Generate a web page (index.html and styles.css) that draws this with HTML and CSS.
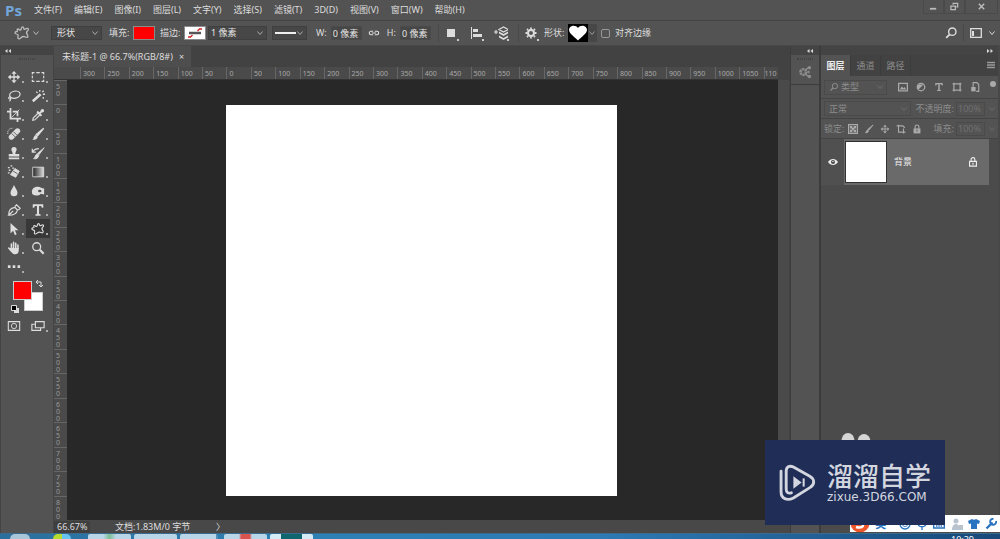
FILE: index.html
```html
<!DOCTYPE html>
<html lang="zh-CN">
<head>
<meta charset="utf-8">
<title>未标题-1 @ 66.7%(RGB/8#)</title>
<link rel="stylesheet" href="styles.css">
</head>
<body>
<svg class="defs" aria-hidden="true">
  <symbol id="chev" viewBox="0 0 8 8"><path d="M1.500 2.500 4 5.500 6.500 2.500" fill="none" stroke="currentColor"/></symbol>
  <symbol id="blob" viewBox="0 0 16 16"><path d="M5.500 5C6.500 5.500 7 5 7.300 3.500 7.800 1.300 9.500 1.500 9.700 3.200 9.800 4.500 10.500 4.500 12 3.700 14.300 2.600 15.300 4.300 13.500 5.800 12 7 12.200 8 13.300 9.500 14.800 11.800 13.500 13 11.500 12 9.500 11 8.500 11.300 7 12.700 5 14.500 3.300 13.800 4 11.500 4.500 10 4 9.500 2.300 9 .3 8.300.8 6.500 2.500 6.600 3.500 6.700 3.500 6 3.200 5 3 3.500 4.500 3.800 5.500 5Z" fill="none" stroke="currentColor" stroke-width="1.300" stroke-linejoin="round"/></symbol>
  <symbol id="search" viewBox="0 0 16 16"><circle cx="9.500" cy="6.500" r="4.200" fill="none" stroke="currentColor" stroke-width="1.600"/><path d="M6.500 9.500 2.500 13.500" stroke="currentColor" stroke-width="2"/></symbol>
  <symbol id="move" viewBox="0 0 16 16"><path d="M8 3v10M3 8h10" stroke="currentColor" stroke-width="1.500"/><path d="M8 1 5 4.300h6ZM8 15l-3-3.300h6ZM1 8l3.300-3v6ZM15 8l-3.300-3v6Z" fill="currentColor"/></symbol>
  <symbol id="brush" viewBox="0 0 16 16"><path d="M14.500 1.500 7.500 10 6 8.700Z" fill="currentColor" stroke="currentColor" stroke-width="1.500"/><path d="M5.300 9 7.800 11.300C6.500 14.500 4 15 1.500 14.500 3.500 13 2.800 10 5.300 9Z" fill="currentColor"/></symbol>
  <symbol id="type" viewBox="0 0 16 16"><path d="M2 1.500h12v4h-1.500L11.500 3.500H9.200v9l1.800.5v1.500H5V13l1.800-.5v-9H4.500l-1 2H2Z" fill="currentColor"/></symbol>
  <symbol id="padlock" viewBox="0 0 16 16"><path d="M2.500 7h11v8h-11Z" fill="currentColor"/><path d="M5 7V4.500a3 3 0 0 1 6 0V7" fill="none" stroke="currentColor" stroke-width="1.800"/><path d="M8 9v3" stroke="#535353" stroke-width="1.500"/></symbol>
</svg>
<div class="app">
  <header class="menubar">
    <span class="brand">Ps</span>
    <nav class="menus">
      <button>文件(F)</button><button>编辑(E)</button><button>图像(I)</button><button>图层(L)</button><button>文字(Y)</button><button>选择(S)</button><button>滤镜(T)</button><button>3D(D)</button><button>视图(V)</button><button>窗口(W)</button><button>帮助(H)</button>
    </nav>
    <div class="winbtns">
      <button aria-label="最小化"><svg viewBox="0 0 10 10"><path d="M1 7.500h7" stroke="currentColor" stroke-width="2"/></svg></button>
      <button aria-label="还原"><svg viewBox="0 0 10 10"><path d="M3.500 3V1.500h5v4H7M1 4.500h5v4H1Z" fill="none" stroke="currentColor" stroke-width="1.400"/></svg></button>
      <button class="close" aria-label="关闭"><svg viewBox="0 0 10 10"><path d="M2 2l6 6M8 2 2 8" stroke="currentColor" stroke-width="1.600"/></svg></button>
    </div>
  </header>

  <section class="options">
    <button class="preset" aria-label="自定形状工具"><svg class="i16"><use href="#blob"/></svg><svg class="i8"><use href="#chev"/></svg></button>
    <div class="pick mode"><select aria-label="模式"><option>形状</option></select><svg class="i8"><use href="#chev"/></svg></div>
    <div class="field"><span>填充:</span><button class="swatch red" aria-label="填充"></button></div>
    <div class="field"><span>描边:</span><button class="swatch none" aria-label="描边"><svg viewBox="0 0 20 12"><path d="M4 6h12" stroke="#555" stroke-width="2.500"/><path d="M3 10h2.500l2-2M12.500 4l2-2H17" fill="none" stroke="#d02020" stroke-width="1.300"/></svg></button></div>
    <div class="pick width"><input aria-label="描边宽度" value="1 像素"><svg class="i8"><use href="#chev"/></svg></div>
    <button class="pick line" aria-label="描边类型"><i></i><svg class="i8"><use href="#chev"/></svg></button>
    <label class="size">W:<input value="0 像素"></label>
    <button class="ib" aria-label="链接"><svg class="i12" viewBox="0 0 14 8"><path d="M6 2H3.500a2 2 0 0 0 0 4H6M8 2h2.500a2 2 0 0 1 0 4H8M4.500 4h5" fill="none" stroke="currentColor" stroke-width="1.300"/></svg></button>
    <label class="size">H:<input value="0 像素"></label>
    <div class="group">
      <button class="ib drop" aria-label="路径操作"><svg class="i12" viewBox="0 0 12 12"><path d="M2 2h8v8H2Z" fill="currentColor"/></svg></button>
      <button class="ib drop" aria-label="对齐"><svg class="i12" viewBox="0 0 12 12"><path d="M1.500 0v12" stroke="currentColor"/><path d="M3 2h5v3H3ZM3 7h9v3H3Z" fill="currentColor"/></svg></button>
      <button class="ib drop" aria-label="排列"><svg class="i14" viewBox="0 0 14 14"><path d="M0 6h4M2 4v4" stroke="currentColor" stroke-width="1.200"/><path d="M5 3.500 9.500 1 14 3.500 9.500 6Z" fill="none" stroke="currentColor" stroke-width="1.300"/><path d="M5 5.500 9.500 8 14 5.500v2L9.500 10 5 7.500ZM5 9.500 9.500 12 14 9.500v2L9.500 14 5 11.500Z" fill="currentColor"/></svg></button>
    </div>
    <div class="group last">
      <button class="ib drop" aria-label="设置"><svg class="i12" viewBox="0 0 12 12"><circle cx="6" cy="6" r="3" fill="none" stroke="currentColor" stroke-width="2"/><path d="M6 .5V2M6 10v1.500M.5 6H2M10 6h1.500M2 2l1 1M9 9l1 1M10 2 9 3M3 9l-1 1" stroke="currentColor" stroke-width="1.800"/></svg></button>
      <div class="field"><span>形状:</span><button class="heart" aria-label="形状"><svg viewBox="0 0 20 18"><path d="M10 16.500C7 13 1 10 1 5.800 1 1.500 7.500 0 10 4c2.500-4 9-2.500 9 1.800 0 4.200-6 7.200-9 10.700Z" fill="#fff"/></svg></button><button class="dd" aria-label="选择形状"><svg class="i8"><use href="#chev"/></svg></button></div>
    </div>
    <label class="check"><input type="checkbox">对齐边缘</label>
    <div class="right">
      <button class="ib" aria-label="搜索"><svg class="i14"><use href="#search"/></svg></button>
      <button class="ws" aria-label="工作区"><svg class="i12" viewBox="0 0 12 12"><path d="M.7 1.700h10.600v8.600H.7Z" fill="none" stroke="currentColor" stroke-width="1.300"/><path d="M2 4h2v5H2Z" fill="currentColor"/></svg><svg class="i8"><use href="#chev"/></svg></button>
    </div>
  </section>

  <main class="main">
    <aside class="toolbox">
      <div class="strip"><svg class="i8" viewBox="0 0 8 8"><path d="M3.500 2v4L1 4ZM7 2v4L4.500 4Z" fill="currentColor"/></svg></div>
      <div class="grip"></div>
      <div class="tools">
        <button aria-label="移动"><svg><use href="#move"/></svg></button>
        <button aria-label="选框"><svg viewBox="0 0 16 16"><path d="M1.500 5V3H4M6 3h4M12 3h2.500v2M14.500 6.500v3M14.500 11v2H12M10 13H6M4 13H1.500v-2M1.500 9.500v-3" fill="none" stroke="currentColor" stroke-width="1.300"/></svg></button>
        <button aria-label="套索"><svg viewBox="0 0 16 16"><ellipse cx="9" cy="6.500" rx="6" ry="4" transform="rotate(-12 9 6.500)" fill="none" stroke="currentColor" stroke-width="1.400"/><path d="M4 9c-3 0-2.500 3 0 2.500M4 10c.5 2 0 3.500-1.500 4" fill="none" stroke="currentColor" stroke-width="1.200"/></svg></button>
        <button aria-label="魔棒"><svg viewBox="0 0 16 16"><path d="M2 14 11 6" stroke="currentColor" stroke-width="2.800"/><path d="M10 1v2M14 9v2M14.500 2 13 3.500M6 3l1.500 1.500M13.500 6H16" stroke="currentColor" stroke-width="1.500"/></svg></button>
        <button aria-label="裁剪"><svg viewBox="0 0 16 16"><path d="M4 0v12h8M0 4h4M6.500 4H12v5.500M12 12v4M12 12h4" fill="none" stroke="currentColor" stroke-width="2"/><path d="m5 11 9-9" stroke="currentColor"/></svg></button>
        <button aria-label="吸管"><svg viewBox="0 0 16 16"><path d="M8 6 2.500 11.500 2 14l2.500-.5L10 8" fill="none" stroke="currentColor" stroke-width="1.300"/><path d="m7 4 5 5M9 7l4-4" stroke="currentColor" stroke-width="2.200"/><circle cx="13" cy="3" r="2" fill="currentColor"/></svg></button>
        <button aria-label="修复画笔"><svg viewBox="0 0 16 16"><path d="m5 11.500 7-7" stroke="currentColor" stroke-width="6" stroke-linecap="round"/><path d="m5.500 7.500 4 4M7.500 5.500l4 4" stroke="#535353"/><path d="M1 8C0 4 3 1 7 1.500" fill="none" stroke="currentColor" stroke-dasharray="1.500 1"/></svg></button>
        <button aria-label="画笔"><svg><use href="#brush"/></svg></button>
        <button aria-label="图章"><svg viewBox="0 0 16 16"><path d="M8 1a3 3 0 0 1 3 3c0 2-1.500 2.500-1.500 5H14v3H2V9h4.500C6.500 6.500 5 6 5 4a3 3 0 0 1 3-3ZM2 13h12v2H2Z" fill="currentColor"/></svg></button>
        <button aria-label="历史画笔"><svg viewBox="0 0 16 16"><path d="m15 2-6 8-1.500-1.500ZM7 9l2 2c-1 3-3 4-6 3.500C5 13 4.500 10.500 7 9Z" fill="currentColor" stroke="currentColor"/><path d="M1.500 3v4h4M2 6.500C4 3.500 6 3 9 3" fill="none" stroke="currentColor" stroke-width="1.400"/></svg></button>
        <button aria-label="橡皮擦"><svg viewBox="0 0 16 16"><path d="m9 4 5 3-4 7-6-3Z" fill="currentColor" stroke="currentColor" stroke-linejoin="round"/><path d="m7 7 5 3" stroke="#535353"/><path d="M1 3h2M4 1h2M2 6h2M1 9h2M6 3.500h2" stroke="currentColor" stroke-width="1.500"/></svg></button>
        <button aria-label="渐变"><svg viewBox="0 0 16 16"><linearGradient id="grad"><stop stop-color="#222"/><stop offset="1" stop-color="#ddd"/></linearGradient><path d="M2 2.500h12.500v11H2Z" fill="url(#grad)" stroke="currentColor"/></svg></button>
        <button aria-label="模糊"><svg viewBox="0 0 16 16"><path d="M8 1c1.500 4 4 6 4 9a4 4 0 0 1-8 0c0-3 2.500-5 4-9Z" fill="currentColor"/></svg></button>
        <button aria-label="减淡"><svg viewBox="0 0 16 16"><path d="M1 9c0-4 3-6 7-6 3 0 4 2 7 2v7l-4-1c-1 2-3 2-5 2-3 0-5-1-5-4Z" fill="currentColor"/><ellipse cx="10" cy="8" rx="2" ry="1.500" fill="#535353"/></svg></button>
        <button aria-label="钢笔"><svg viewBox="0 0 16 16"><path d="M2 14c0-5 1-8 7-9l3 3c-1 5-5 6-10 6l5-5M9 4l2-2 4 4-2 2" fill="none" stroke="currentColor" stroke-width="1.400"/></svg></button>
        <button aria-label="文字"><svg><use href="#type"/></svg></button>
        <button aria-label="路径选择"><svg viewBox="0 0 16 16"><path d="M4 1v12l3-3 2 5 2-1-2-4.500h4Z" fill="currentColor"/></svg></button>
        <button class="on" aria-label="自定形状"><svg><use href="#blob"/></svg></button>
        <button aria-label="抓手"><svg viewBox="0 0 16 16"><path d="M5 9V3.500M7.500 8V1.500M10 8V2.500M12.500 9V4.500M2 8l3 3.500" stroke="currentColor" stroke-width="1.800" stroke-linecap="round"/><path d="M4 8h9.400v3c0 5-6.400 5-8 2L2.500 9Z" fill="currentColor"/></svg></button>
        <button class="flat" aria-label="缩放"><svg viewBox="0 0 16 16"><circle cx="6.500" cy="6.500" r="4.500" fill="none" stroke="currentColor" stroke-width="1.500"/><path d="m10 10 4.500 4.500" stroke="currentColor" stroke-width="2.400"/></svg></button>
        <button aria-label="编辑工具栏"><svg viewBox="0 0 16 16"><path d="M1 6h3v3H1ZM6.500 6h3v3h-3ZM12 6h3v3h-3Z" fill="currentColor"/></svg></button>
      </div>
      <div class="colors">
        <button class="bg" aria-label="背景色"></button>
        <button class="fg" aria-label="前景色"></button>
        <svg class="swap" viewBox="0 0 8 8"><path d="M1.500 2H6v4.500M3 0 1 2l2 2M4 5l2 2 2-2" fill="none" stroke="currentColor"/></svg>
        <svg class="reset" viewBox="0 0 8 8"><path d="M3 3h5v5H3Z" fill="#ddd"/><path d="M.5.500h5v5h-5Z" fill="#000" stroke="#ddd"/></svg>
      </div>
      <div class="tools modes">
        <button class="flat" aria-label="快速蒙版"><svg viewBox="0 0 16 16"><path d="M1.500 3h13v10h-13Z" fill="none" stroke="currentColor" stroke-width="1.200"/><circle cx="8" cy="8" r="3" fill="none" stroke="currentColor"/></svg></button>
        <button aria-label="屏幕模式"><svg viewBox="0 0 16 16"><path d="M5 6H1v7h10v-3M5 3h10v7H5Z" fill="none" stroke="currentColor" stroke-width="1.300"/></svg></button>
      </div>
    </aside>

    <section class="document">
      <div class="tabs"><div class="tab"><span>未标题-1 @ 66.7%(RGB/8#)</span><button aria-label="关闭文档">×</button></div></div>
      <div class="hruler"><div class="scale">
        <span>300</span><span>250</span><span>200</span><span>150</span><span>100</span><span>50</span><span>0</span><span>50</span><span>100</span><span>150</span><span>200</span><span>250</span><span>300</span><span>350</span><span>400</span><span>450</span><span>500</span><span>550</span><span>600</span><span>650</span><span>700</span><span>750</span><span>800</span><span>850</span><span>900</span><span>950</span><span>1000</span><span>1050</span><span>110</span>
      </div></div>
      <div class="work">
        <div class="vruler"><span>50</span><span>0</span><span>50</span><span>100</span><span>150</span><span>200</span><span>250</span><span>300</span><span>350</span><span>400</span><span>450</span><span>500</span><span>550</span><span>600</span><span>650</span><span>700</span><span>750</span><span>800</span></div>
        <div class="stage"><div class="canvas"></div></div>
        <div class="scroll"></div>
      </div>
      <footer class="status"><span class="zoom">66.67%</span><span class="info">文档:1.83M/0 字节</span><span class="arrow">〉</span></footer>
    </section>

    <aside class="dock">
      <div class="strip"><svg class="i8" viewBox="0 0 8 8"><path d="M3.500 2v4L1 4ZM7 2v4L4.500 4Z" fill="currentColor"/></svg></div>
      <div class="dockbody"><div class="grip"></div><button aria-label="库"><svg viewBox="0 0 16 16"><circle cx="6" cy="8" r="3.200" fill="none" stroke="currentColor" stroke-width="3" stroke-dasharray="2.500 .8"/><path d="m8 6 4-3M8 10l4 3" stroke="currentColor" stroke-width="1.600"/><circle cx="13" cy="3" r="2" fill="currentColor"/><circle cx="13" cy="13" r="2" fill="currentColor"/><circle cx="12" cy="8" r="1.500" fill="currentColor"/></svg></button></div>
    </aside>

    <aside class="panel">
      <div class="strip end"><svg class="i8" viewBox="0 0 8 8"><path d="M1 2v4l2.500-2ZM4.500 2v4L7 4Z" fill="currentColor"/></svg></div>
      <div class="ptabs"><button class="active">图层</button><button>通道</button><button>路径</button><svg class="i10 burger" viewBox="0 0 10 10"><path d="M1 2.500h8M1 5h8M1 7.500h8" stroke="currentColor" stroke-width="1.400"/></svg></div>
      <div class="row filter">
        <div class="box kind"><svg class="i10"><use href="#search"/></svg><select aria-label="过滤类型"><option>类型</option></select><svg class="i8"><use href="#chev"/></svg></div>
        <div class="icons">
          <svg class="i10" viewBox="0 0 16 16"><path d="M1 2h14v12H1Z" fill="none" stroke="currentColor" stroke-width="2"/><path d="m3 12 3-5 3 3 2-2 2 4Z" fill="currentColor"/></svg>
          <svg class="i10" viewBox="0 0 16 16"><circle cx="8" cy="8" r="6" fill="none" stroke="currentColor" stroke-width="2"/><path d="M4 12a6 6 0 0 1 0-8l8 0Z" fill="currentColor"/></svg>
          <svg class="i10"><use href="#type"/></svg>
          <svg class="i10" viewBox="0 0 16 16"><path d="M3 3h10v10H3ZM1 3h2V1M13 1v2h2M1 13h2v2M13 15v-2h2" fill="none" stroke="currentColor" stroke-width="2"/></svg>
          <svg class="i10" viewBox="0 0 16 16"><path d="M5 8V1h6l3 3v11h-4" fill="none" stroke="currentColor" stroke-width="1.800"/><path d="M2 8h7v7H2Z" fill="currentColor"/></svg>
        </div>
        <i class="dot"></i>
      </div>
      <div class="row blend">
        <div class="box"><select aria-label="混合模式"><option>正常</option></select><svg class="i8"><use href="#chev"/></svg></div>
        <label>不透明度:<input value="100%"></label><svg class="i8 dim"><use href="#chev"/></svg>
      </div>
      <div class="row lock">
        <span>锁定:</span>
        <div class="icons">
          <svg class="i10" viewBox="0 0 16 16"><path d="M1 1h14v14H1Z" fill="none" stroke="currentColor" stroke-width="2"/><path d="M3 3h4v4H3ZM9 3h4v4H9ZM6 6h4v4H6ZM3 9h4v4H3ZM9 9h4v4H9Z" fill="currentColor"/></svg>
          <svg class="i10"><use href="#brush"/></svg>
          <svg class="i10"><use href="#move"/></svg>
          <svg class="i10" viewBox="0 0 16 16"><path d="M1 3h10l3 3M4 1v12h11M12 7v8" fill="none" stroke="currentColor" stroke-width="1.800"/></svg>
          <svg class="i10"><use href="#padlock"/></svg>
        </div>
        <label>填充:<input value="100%"></label><svg class="i8 dim"><use href="#chev"/></svg>
      </div>
      <div class="layers">
        <div class="layer">
          <button class="eye" aria-label="可见性"><svg class="i10" viewBox="0 0 16 12"><path d="M0 6c4-6.500 12-6.500 16 0-4 6.500-12 6.500-16 0Z" fill="currentColor"/><circle cx="8" cy="6" r="3.200" fill="#444"/><circle cx="8" cy="5" r="1.200" fill="#eee"/></svg></button>
          <div class="item"><i class="thumb"></i><span>背景</span><svg class="i10" viewBox="0 0 16 16"><path d="M2.500 7h11v7.500h-11ZM5 7V4a3 3 0 0 1 6 0v3M8 9v3.500" fill="none" stroke="currentColor" stroke-width="1.800"/></svg></div>
        </div>
      </div>
    </aside>
  </main>

  <footer class="taskbar"><i class="orb"></i><i class="spots"></i><i class="task"></i><i class="task"></i><i class="task stack"></i><i class="task hot"></i><i class="task ps"></i><time>10:39</time></footer>

  <div class="ime">
    <svg class="sogou" viewBox="0 0 20 18"><circle cx="10" cy="8" r="9.500" fill="#f0562b"/><path d="M14 4C8 2 5 7 10 8s4 6-4 4" fill="none" stroke="#fff" stroke-width="2.500"/></svg>
    <span>英</span><span>’</span>
    <svg class="i12" viewBox="0 0 12 12"><circle cx="6" cy="6" r="5" fill="none" stroke="currentColor" stroke-width="1.400"/><path d="M3.500 7c1 2 4 2 5 0M4 3.500V5M8 3.500V5" fill="none" stroke="currentColor"/></svg>
    <svg class="i12" viewBox="0 0 12 12"><rect x="4" y="0" width="4" height="7" rx="2" fill="currentColor"/><path d="M2 5c0 5 8 5 8 0M6 9v3" fill="none" stroke="currentColor" stroke-width="1.300"/></svg>
    <svg class="i12" viewBox="0 0 12 12"><path d="M.7 2h10.600v8H.7Z" fill="none" stroke="currentColor" stroke-width="1.400"/><path d="M2 4.500h8M3 8h6" stroke="currentColor" stroke-width="1.300" stroke-dasharray="1.500 .8"/></svg>
    <svg class="i12 pale" viewBox="0 0 12 12"><circle cx="5" cy="3" r="2.500" fill="currentColor"/><path d="M1 12c0-8 8-8 8 0ZM8 7h4v5H8Z" fill="currentColor"/></svg>
    <svg class="i12" viewBox="0 0 12 12"><path d="M4 1c1 1 3 1 4 0l4 2-1 3-2-.5V11H3V5.500L1 6 0 3Z" fill="currentColor"/></svg>
    <svg class="i12" viewBox="0 0 12 12"><path d="m1.500 10.500 6-6" stroke="currentColor" stroke-width="2.400"/><path d="M11 3a3 3 0 1 1-2.500-2.200" fill="none" stroke="currentColor" stroke-width="1.800"/></svg>
  </div>
  <div class="watermark">
    <svg class="ears" viewBox="0 0 30 14"><ellipse cx="7" cy="8" rx="6.500" ry="8" fill="#d5d5d5"/><ellipse cx="23" cy="9" rx="6.500" ry="8" fill="#d5d5d5"/></svg>
    <svg class="logo" viewBox="0 0 36 36"><path d="M12 28c-3 1-5 0-5-4V7c0-4 3-6 7-4l16 9c5 3 5 8 0 11L14 33c-6 3-12 1-12-6V7" fill="none" stroke="#d3d6df" stroke-width="2.800" stroke-linecap="round"/><path d="M14 12v12l8-6Z" fill="#d3d6df"/><path d="M24 14v8" stroke="#d3d6df" stroke-width="2"/></svg>
    <div class="words"><b>溜溜自学</b><span>zixue.3D66.COM</span></div>
  </div>
</div>
</body>
</html>
```
FILE: styles.css
```css
* { box-sizing: border-box; }
body { margin: 0; font: 9px/12px "Noto Sans", "Noto Sans CJK SC", sans-serif; color: #ddd; background: #424242; }
button, input, select { margin: 0; padding: 0; border: 0; border-radius: 0; background: none; font: inherit; color: inherit; appearance: none; outline: 0; }
button { display: flex; align-items: center; justify-content: center; }
svg { display: block; flex: none; }
i { display: block; }
.defs { display: none; }
.i8 { width: 8px; height: 8px; }
.i10 { width: 10px; height: 10px; }
.i12 { width: 12px; height: 12px; }
.i14 { width: 14px; height: 14px; }
.i16 { width: 16px; height: 16px; }

.app { position: relative; height: 100vh; display: flex; flex-direction: column; overflow: hidden; }

.menubar { display: flex; align-items: center; height: 21px; background: #535353; border-bottom: 1px solid #444; flex: none; }
.brand { width: 29px; padding-left: 5px; font: bold 15px/20px "Open Sans", sans-serif; color: #72a7dc; }
.menus { display: flex; gap: 12px; flex: 1; padding-left: 5px; }
.winbtns { display: flex; align-self: flex-start; padding-right: 2px; color: #bbb; }
.winbtns button { width: 21px; height: 14px; border: 1px solid #4a4a4a; border-top: 0; }
.winbtns .close { width: 33px; }
.winbtns svg { width: 9px; height: 9px; }

.options { display: flex; align-items: center; height: 25px; background: #535353; border-bottom: 1px solid #484848; flex: none; padding: 0 4px 0 14px; }
.preset { gap: 2px; width: 34px; margin-right: 3px; color: #bbb; justify-content: flex-start; }
.pick { display: flex; align-items: center; height: 14px; background: #474747; border: 1px solid #3f3f3f; padding: 0 2px 0 4px; color: #aaa; }
.pick select, .pick input { flex: 1; min-width: 0; width: 100%; color: #e4e4e4; }
.mode { width: 51px; margin-right: 7px; padding-left: 5px; }
.field { display: flex; align-items: center; }
.field span { width: 24px; white-space: nowrap; }
.swatch { width: 22px; height: 14px; border: 1px solid #8a8a8a; margin-right: 5px; }
.swatch.red { background: #f00; }
.swatch.none { background: #fff; margin-right: 2px; }
.swatch svg { width: 20px; height: 12px; }
.width { width: 59px; margin-right: 5px; padding-left: 2px; }
.line { width: 35px; margin-right: 9px; padding: 0 2px; }
.line i { flex: 1; height: 2px; background: #eee; }
.size { display: flex; align-items: center; gap: 4px; }
.size input { width: 31px; height: 14px; background: #474747; border: 1px solid #4a4a4a; color: #e4e4e4; padding-left: 1px; }
.ib { position: relative; width: 25px; height: 18px; }
.drop::after { content: ""; position: absolute; right: 5px; bottom: 1px; width: 2px; height: 2px; background: #ccc; }
.group { display: flex; align-items: center; border-left: 1px solid #484848; margin-left: 7px; }
.group.last { margin-left: 4px; }
.heart { width: 20px; height: 18px; background: #000; }
.heart svg { width: 20px; height: 18px; }
.dd { width: 9px; height: 18px; background: #474747; color: #999; }
.check { display: flex; align-items: center; gap: 5px; margin-left: 4px; }
.check input { width: 9px; height: 9px; border: 1px solid #999; border-radius: 2px; }
.right { display: flex; align-items: center; margin-left: auto; }
.ws { gap: 6px; padding-left: 6px; height: 18px; border-left: 1px solid #484848; }

.main { display: flex; flex: 1; min-height: 0; }
.strip { display: flex; align-items: center; height: 9px; background: #444; padding-left: 3px; flex: none; }
.strip.end { justify-content: flex-end; padding-right: 4px; }
.grip { height: 2px; margin: 3px auto 0; width: 16px; border-top: 1px dotted #444; border-bottom: 1px dotted #444; }

.toolbox { width: 54px; background: #535353; border-left: 1px solid #444; border-right: 1px solid #444; flex: none; }
.tools { display: grid; grid-template-columns: 24px 24px; grid-auto-rows: 19px; padding: 7px 0 0 1px; }
.tools button { position: relative; }
.tools button::after { content: ""; position: absolute; right: 2px; bottom: 3px; width: 2px; height: 2px; background: #aaa; }
.tools .flat::after { display: none; }
.tools .on { background: #383838; }
.tools svg { width: 14px; height: 14px; }
.colors { position: relative; height: 36px; margin-top: 2px; }
.fg, .bg { position: absolute; width: 19px; height: 19px; border: 1px solid #ccc; }
.fg { left: 12px; top: 3px; background: #f00; }
.bg { left: 23px; top: 14px; background: #fff; }
.swap, .reset { position: absolute; width: 8px; height: 8px; }
.swap { left: 34px; top: 2px; }
.reset { left: 10px; top: 27px; }
.modes { padding-top: 2px; }

.document { display: flex; flex-direction: column; flex: 1; min-width: 0; background: #424242; }
.tabs { display: flex; height: 21px; flex: none; }
.tab { display: flex; align-items: center; gap: 6px; padding: 0 7px 0 8px; background: #4e4e4e; }
.tab span { white-space: nowrap; }
.hruler { height: 13px; flex: none; overflow: hidden; background: #4a4a4a; border-bottom: 1px solid #333; padding-left: 26px; margin-right: 12px; }
.scale { display: grid; grid-auto-flow: column; grid-auto-columns: 1fr; width: 708px; }
.scale span { height: 12px; border-left: 1px solid #666; padding-left: 2px; font-size: 7px; line-height: 13px; color: #a8a8a8; }
.scale span:last-child { padding-left: 0; }
.work { display: flex; flex: 1; min-height: 0; }
.vruler { display: grid; grid-auto-rows: 1fr; width: 13px; background: #4a4a4a; flex: none; }
.vruler span { min-height: 0; border-top: 1px solid #666; padding: 2px 6px 0 2px; font-size: 7px; line-height: 7px; word-break: break-all; color: #999; }
.stage { flex: 1; background: #282828; padding: 25px 161px 24px 159px; }
.canvas { height: 100%; background: #fff; }
.scroll { width: 12px; background: #4a4a4a; border-right: 1px solid #444; flex: none; }
.status { display: flex; align-items: center; height: 13px; flex: none; background: #484848; }
.zoom { width: 36px; padding-left: 3px; background: #3f3f3f; }
.info { padding-left: 25px; width: 126px; }

.dock { display: flex; flex-direction: column; width: 29px; flex: none; border-left: 1px solid #3c3c3c; }
.dock .strip { justify-content: flex-end; padding-right: 5px; }
.dockbody { flex: 1; background: #535353; color: #8c8c8c; }
.dockbody button { width: 100%; height: 25px; border-bottom: 1px solid #3c3c3c; }
.dockbody svg { width: 14px; height: 14px; }

.panel { display: flex; flex-direction: column; width: 181px; flex: none; background: #4b4b4b; border-left: 2px solid #3c3c3c; border-right: 2px solid #484848; }
.ptabs { display: flex; height: 21px; background: #424242; color: #8d8d8d; flex: none; }
.ptabs button { width: 30px; border-right: 1px solid #3c3c3c; }
.ptabs .active { background: #535353; color: #eee; font-weight: bold; }
.burger { margin: 5px 2px 0 auto; color: #999; }
.row { display: flex; align-items: center; height: 20px; padding: 0 2px 0 3px; background: #535353; border-bottom: 1px solid #444; color: #8c8c8c; flex: none; }
.filter { height: 23px; }
.box { display: flex; align-items: center; height: 15px; border: 1px solid #4a4a4a; padding: 0 2px; }
.box select { flex: 1; min-width: 0; }
.box .i8, .dim { color: #6c6c6c; }
.kind { width: 63px; gap: 2px; padding-left: 4px; }
.icons { display: flex; color: #aaa; }
.filter .icons { gap: 8px; padding-left: 11px; }
.dot { width: 6px; height: 6px; border-radius: 50%; background: #aaa; margin: -6px 0 0 auto; }
.blend .box { width: 87px; padding-left: 4px; }
.row label { display: flex; align-items: center; margin-left: auto; white-space: nowrap; }
.row label input { width: 29px; height: 14px; margin-left: 2px; padding-left: 1px; border: 1px solid #4a4a4a; color: #707070; }
.row .dim { margin-left: 3px; }
.lock .icons { gap: 6px; padding-left: 4px; }
.layers { flex: 1; }
.layer { display: flex; height: 46px; margin-right: 9px; }
.eye { width: 23px; background: #505050; color: #eee; }
.item { display: flex; align-items: center; flex: 1; background: #6a6a6a; padding: 0 11px 0 1px; color: #eee; }
.thumb { width: 42px; height: 42px; background: #fff; border: 1px solid #333; margin-right: 7px; }
.item span { flex: 1; }

.taskbar { display: flex; gap: 3px; height: 6px; flex: none; background: linear-gradient(90deg, #2b6f9c, #2d81b5 30%, #2d7ab5 60%, #174878); border-top: 1px solid #3b6a8c; }
.orb { width: 20px; height: 5px; margin-left: 10px; border-radius: 10px 10px 0 0; background: #a9c5d8; }
.spots { width: 18px; height: 5px; margin: 0 14px 0 20px; border-radius: 8px 8px 0 0; background: linear-gradient(90deg, #b7dc2e 50%, #66c4ee 50%); }
.task { width: 43px; background: linear-gradient(90deg, #b9d6e8 35%, #7dbf96 50%, #b9d6e8 65%); border-radius: 2px 2px 0 0; }
.task:nth-child(4) { background: #b9d6e8; }
.task.stack { width: 38px; background: #b9d6e8; border-right: 2px solid #4f8fb8; margin-right: 3px; }
.task.hot { background: linear-gradient(90deg, #b9d6e8 35%, #d9534f 40%, #d9534f 60%, #b9d6e8 65%); }
.task.ps { background: linear-gradient(90deg, #d5ebf5 25%, #10666f 26%, #10666f 74%, #d5ebf5 75%); }
.taskbar time { margin: 1px 26px 0 auto; height: 4px; overflow: hidden; line-height: 9px; color: #fff; }

.ime { position: absolute; right: 0; bottom: 7px; display: flex; align-items: center; justify-content: space-between; width: 150px; height: 17px; padding: 0 3px 0 0; background: #fff; color: #2a73c0; overflow: hidden; }
.ime span { font-size: 11px; font-weight: bold; }
.sogou { width: 20px; height: 18px; }
.pale { color: #b9c3ce; }
.watermark { position: absolute; right: 55px; bottom: 14px; display: flex; align-items: center; gap: 11px; width: 180px; height: 85px; padding-left: 14px; background: #1f2d57; color: #d3d6df; }
.ears { position: absolute; left: 76px; top: -7px; width: 30px; height: 14px; clip-path: inset(0 0 7px 0); }
.logo { width: 37px; height: 37px; }
.words b { display: block; font: 500 26px/26px "Noto Sans CJK SC", sans-serif; }
.words span { display: block; margin-top: 3px; font: 12px/12px "DejaVu Sans", sans-serif; }
```
